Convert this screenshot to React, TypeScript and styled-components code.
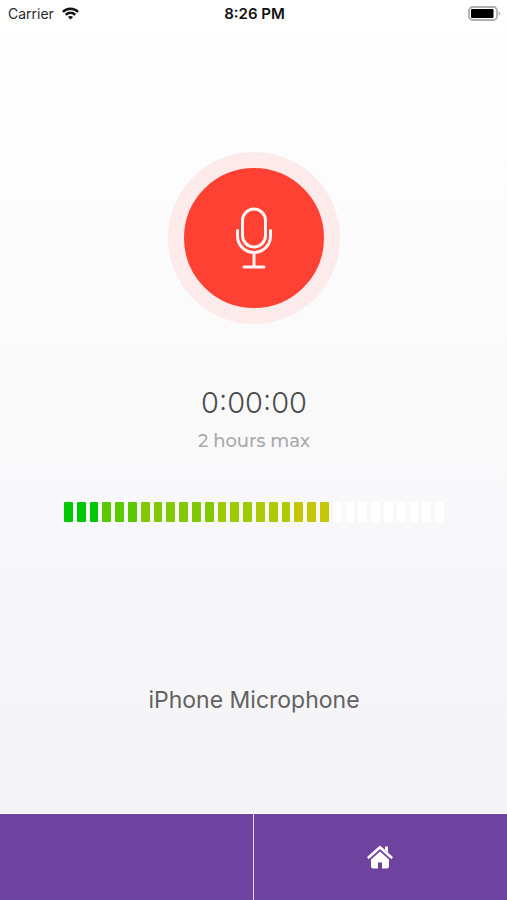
import React from "react";
import styled, { createGlobalStyle } from "styled-components";

const GlobalStyle = createGlobalStyle`
  *, *::before, *::after { box-sizing: border-box; }
  body {
    margin: 0;
    font-family: Inter, "Liberation Sans", sans-serif;
    color: #626262;
  }
`;

const Screen = styled.div`
  min-height: 100vh;
  display: flex;
  flex-direction: column;
  background: linear-gradient(#ffffff, #f3f3f6);
`;

const StatusBar = styled.header`
  height: 27px;
  padding: 0 6px 0 8px;
  display: grid;
  grid-template-columns: 1fr auto 1fr;
  align-items: center;
  font-size: 14px;
  line-height: 20px;
  color: #2a2a2a;
`;

const Carrier = styled.div`
  display: flex;
  align-items: center;
  gap: 8px;
`;

const Clock = styled.time`
  font-size: 15px;
  font-weight: 600;
  color: #111111;
`;

const BatterySlot = styled.div`
  display: flex;
  justify-content: flex-end;
`;

const Recorder = styled.main`
  flex: 1;
  display: flex;
  flex-direction: column;
  align-items: center;
  padding: 125px 63px 0 64px;
`;

const RecordButton = styled.button`
  width: 172px;
  height: 172px;
  padding: 0;
  display: flex;
  align-items: center;
  justify-content: center;
  border: 16px solid #fdebeb;
  border-radius: 50%;
  background: #ff4133;
  cursor: pointer;
`;

const Elapsed = styled.div`
  margin-top: 61px;
  font-size: 29px;
  line-height: 36px;
  font-weight: 300;
  color: #4c4c4c;
`;

const Limit = styled.div`
  margin-top: 8px;
  font-family: Montserrat, Inter, sans-serif;
  font-size: 18px;
  line-height: 24px;
  font-weight: 500;
  color: #a9a9a9;
`;

const Meter = styled.div`
  width: 100%;
  height: 20px;
  margin-top: 49px;
  display: flex;
  gap: 4px;
`;

const Segment = styled.span<{ $color: string }>`
  flex: 1;
  border-radius: 1px;
  background: ${({ $color }) => $color};
`;

const Source = styled.div`
  margin-top: 162px;
  font-size: 23px;
  line-height: 32px;
`;

const BottomBar = styled.nav`
  display: grid;
  grid-template-columns: 1fr 1fr;
  height: 87px;
  border-top: 1px solid #ffffff;
  background: #6e429f;
`;

const Tab = styled.button`
  display: flex;
  align-items: center;
  justify-content: center;
  padding: 0;
  border: 0;
  background: transparent;
  cursor: pointer;

  &:not(:last-child) {
    border-right: 1px solid #e4d9f0;
  }
`;

const levels: [string, number][] = [
  ["#00c805", 3],
  ["#5cc800", 3],
  ["#82c803", 6],
  ["#9ccb02", 3],
  ["#b0c905", 3],
  ["#c3c705", 3],
  ["#ffffff", 9],
];

const segments = levels.flatMap(([color, count]) => Array<string>(count).fill(color));

const WifiIcon = () => (
  <svg width="17" height="13" viewBox="0 0 17 13" fill="none" stroke="#111" strokeWidth="2.4" aria-hidden="true">
    <path d="M0.9 4.9C5 .7 12 .7 16.1 4.9" />
    <path d="M3.7 7.8C6.4 5.1 10.6 5.1 13.3 7.8" />
    <path d="M8.5 12.6 5.9 9.9C7.3 8.6 9.7 8.6 11.1 9.9Z" fill="#111" stroke="none" />
  </svg>
);

const BatteryIcon = () => (
  <svg width="33" height="15" viewBox="0 0 33 15" aria-hidden="true">
    <rect x="1" y="1" width="28" height="13" rx="3.5" fill="#fff" stroke="#b0b0b0" strokeWidth="1.8" />
    <rect x="3" y="3" width="22.5" height="9" rx="1" fill="#000" />
    <path d="M30.7 5.5c1.7.6 1.7 3.4 0 4z" fill="#999" />
  </svg>
);

const MicIcon = () => (
  <svg width="44" height="68" viewBox="0 0 44 68" fill="none" stroke="#fff5f4" strokeWidth="3" strokeLinecap="round" aria-hidden="true">
    <rect x="10.5" y="5" width="23" height="38" rx="11.5" />
    <path d="M5.5 26.5V32a16.5 16.5 0 0 0 33 0v-5.5M22 48.5v14M12 63h20" />
  </svg>
);

const HomeIcon = () => (
  <svg width="26" height="24" viewBox="0 0 26 24" aria-hidden="true">
    <path d="M1.8 12.2 13 2.2l11.2 10" fill="none" stroke="#fff" strokeWidth="2.8" strokeLinecap="round" strokeLinejoin="round" />
    <path d="M18 1.5h3v6l-3-2.7z" fill="#fff" />
    <path d="M13 6.6 22 14.5V21a2.5 2.5 0 0 1-2.5 2.5H15v-6h-4v6H6.5A2.5 2.5 0 0 1 4 21v-6.5z" fill="#fff" />
  </svg>
);

export default function App() {
  return (
    <>
      <GlobalStyle />
      <Screen>
        <StatusBar>
          <Carrier>
            Carrier <WifiIcon />
          </Carrier>
          <Clock>8:26 PM</Clock>
          <BatterySlot>
            <BatteryIcon />
          </BatterySlot>
        </StatusBar>
        <Recorder>
          <RecordButton type="button" aria-label="Record">
            <MicIcon />
          </RecordButton>
          <Elapsed>0:00:00</Elapsed>
          <Limit>2 hours max</Limit>
          <Meter role="img" aria-label="Input level">
            {segments.map((color, index) => (
              <Segment key={index} $color={color} />
            ))}
          </Meter>
          <Source>iPhone Microphone</Source>
        </Recorder>
        <BottomBar>
          <Tab type="button" aria-label="Options" />
          <Tab type="button" aria-label="Home">
            <HomeIcon />
          </Tab>
        </BottomBar>
      </Screen>
    </>
  );
}
